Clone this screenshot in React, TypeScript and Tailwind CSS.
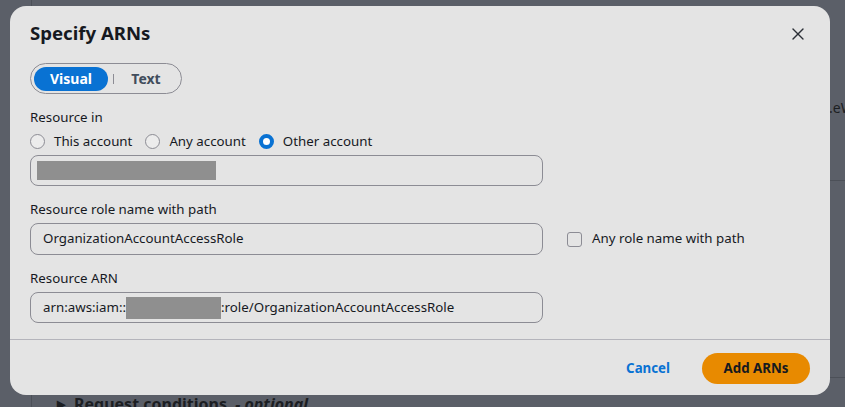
import { X } from 'lucide-react'

const font = { fontFamily: '"Noto Sans", "Open Sans", Arial, sans-serif' }

function Radio({ label, checked }: { label: string; checked?: boolean }) {
    return (
        <label className="flex items-center gap-[9px]">
            {checked ? (
                <span className="w-[15px] h-[15px] rounded-full border-[4.5px] border-[#0972d3] bg-white" />
            ) : (
                <span className="w-[15px] h-[15px] rounded-full border-[1.5px] border-[#8c8c94] bg-[#ececec]" />
            )}
            <span>{label}</span>
        </label>
    )
}

export default function App() {
    return (
        <div
            className="relative w-[845px] h-[407px] overflow-hidden bg-[#5b5f68] text-[#16191f] text-[13.3px]"
            style={font}
        >
            {/* page behind the overlay */}
            <div className="absolute left-[31px] top-0 w-px h-full bg-[#4c5058]" />
            <div className="absolute left-[829px] top-[98px] text-[14px] leading-[20px] text-[#1c1e22]">
                .eW
            </div>
            <div className="absolute left-[830px] top-[180px] w-[20px] h-px bg-[#4c5058]" />
            <div className="absolute left-[830px] top-[377px] w-[20px] h-px bg-[#4c5058]" />
            <div className="absolute left-[57px] top-[392px] flex items-center gap-[9px] text-[16px] font-bold text-[#1c1e22]">
                <span className="text-[11px]">▶</span>
                <span>
                    Request conditions <i className="ml-1">- optional</i>
                </span>
            </div>

            {/* modal */}
            <div className="absolute left-[10px] top-[6px] w-[820px] h-[389px] rounded-2xl bg-[#e4e4e4] flex flex-col">
                <div className="flex justify-between items-start pl-5 pr-[22px] pt-[15px]">
                    <h2 className="text-[18.6px] leading-[24px] font-bold">Specify ARNs</h2>
                    <X className="mt-[3px] w-[20px] h-[20px] text-[#2b2f36]" strokeWidth={1.6} />
                </div>

                <div className="flex flex-col px-5">
                    <div className="mt-[18px] flex items-center w-[152px] h-[31px] rounded-full border border-[#8c8c94] p-[3px] text-[14px]">
                        <span className="w-[74px] h-[24px] rounded-full bg-[#0972d3] text-white font-bold flex items-center justify-center">
                            Visual
                        </span>
                        <span className="ml-[5px] w-px h-[10px] bg-[#8c8c94]" />
                        <span className="flex-1 text-center font-bold text-[#414d5c]">Text</span>
                    </div>

                    <p className="mt-[13px] leading-[20px]">Resource in</p>
                    <div className="mt-[4px] flex items-center gap-[13px] leading-[20px]">
                        <Radio label="This account" />
                        <Radio label="Any account" />
                        <Radio label="Other account" checked />
                    </div>
                    <div className="mt-[4px] w-[513px] h-[31px] rounded-lg border border-[#8c8c94] flex items-center px-[6px]">
                        <span className="w-[179px] h-[19px] bg-[#8f8f8f]" />
                    </div>

                    <p className="mt-[13px] leading-[20px]">Resource role name with path</p>
                    <div className="mt-[4px] flex items-center gap-6">
                        <div className="w-[513px] h-[32px] rounded-lg border border-[#8c8c94] flex items-center px-3">
                            OrganizationAccountAccessRole
                        </div>
                        <label className="flex items-center gap-[10px]">
                            <span className="w-[15px] h-[15px] rounded-[3px] border-[1.5px] border-[#8c8c94]" />
                            <span>Any role name with path</span>
                        </label>
                    </div>

                    <p className="mt-[13px] leading-[20px]">Resource ARN</p>
                    <div className="mt-[4px] w-[513px] h-[31px] rounded-lg border border-[#8c8c94] flex items-center px-3">
                        <span>arn:aws:iam::</span>
                        <span className="w-[95px] h-[22px] bg-[#8f8f8f]" />
                        <span>:role/OrganizationAccountAccessRole</span>
                    </div>
                </div>

                <div className="mt-[16px] border-t border-[#b4b4bb] flex items-center justify-end gap-8 pr-5 pt-[13px]">
                    <button className="font-bold text-[#0972d3]">Cancel</button>
                    <button className="w-[108px] h-[31px] rounded-full bg-[#e88a00] font-bold text-[#16191f]">
                        Add ARNs
                    </button>
                </div>
            </div>
        </div>
    )
}
